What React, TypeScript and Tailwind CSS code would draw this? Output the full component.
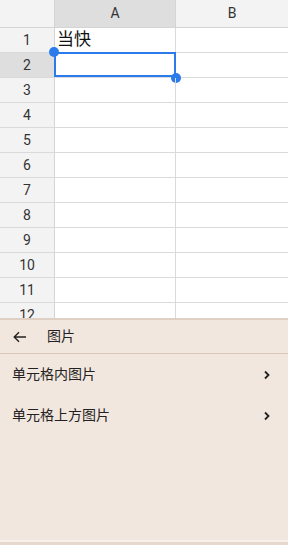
import React from 'react'

const rows = Array.from({ length: 12 }, (_, i) => i + 1)

const font = { fontFamily: 'Roboto, "Noto Sans CJK SC", sans-serif' }

const Grid: React.FC = () => (
  <div className="relative h-[318px] overflow-hidden bg-white">
    <div className="flex h-[28px] border-b border-[#d4d4d4]">
      <div className="w-[55px] shrink-0 border-r border-[#d4d4d4] bg-[#f3f3f3]" />
      <div className="flex w-[121px] shrink-0 items-center justify-center border-r border-[#d4d4d4] bg-[#dedede] text-[14px] text-[#333]">A</div>
      <div className="flex flex-1 items-center justify-center bg-[#f3f3f3] text-[14px] text-[#333]">B</div>
    </div>
    {rows.map((r) => (
      <div key={r} className="flex h-[25px] border-b border-[#dadada]">
        <div className={`flex w-[55px] shrink-0 items-center justify-center border-r border-[#d4d4d4] text-[14px] text-[#333] ${r === 2 ? 'bg-[#dedede]' : 'bg-[#f3f3f3]'}`}>{r}</div>
        <div className="relative flex w-[121px] shrink-0 items-center border-r border-[#dadada] pl-[2px] text-[17px] text-[#111]">
          {r === 1 && '当快'}
          {r === 2 && (
            <>
              <div className="absolute -top-[1px] -left-[1px] h-[25px] w-[122px] border-2 border-[#2b7bec]" />
              <div className="absolute -top-[6px] -left-[6px] h-[10px] w-[10px] rounded-full bg-[#2b7bec]" />
              <div className="absolute -right-[6px] -bottom-[6px] h-[10px] w-[10px] rounded-full bg-[#2b7bec]" />
            </>
          )}
        </div>
        <div className="flex-1" />
      </div>
    ))}
  </div>
)

const Chevron: React.FC = () => (
  <svg width="8" height="10" viewBox="0 0 8 10" fill="none">
    <path d="M2 1.5 L5.5 5 L2 8.5" stroke="#222" strokeWidth="1.8" />
  </svg>
)

const Panel: React.FC = () => (
  <div className="flex flex-1 flex-col border-t-2 border-[#e0d0c3] bg-[#f2e7de]">
    <div className="flex h-[34px] items-center border-b border-[#d6c6b9] px-[13px]">
      <svg width="14" height="12" viewBox="0 0 14 12" fill="none">
        <path d="M13 6 H1.5 M6 1.2 L1.2 6 L6 10.8" stroke="#222" strokeWidth="1.4" />
      </svg>
      <span className="ml-[20px] text-[14px] text-[#222]">图片</span>
    </div>
    <div className="flex h-[41px] items-center justify-between pl-[12px] pr-[17px] text-[14px] text-[#222]">
      <span>单元格内图片</span>
      <Chevron />
    </div>
    <div className="flex h-[41px] items-center justify-between pl-[12px] pr-[17px] text-[14px] text-[#222]">
      <span>单元格上方图片</span>
      <Chevron />
    </div>
    <div className="flex-1" />
    <div className="h-[2px] bg-[#f8f0ea]" />
    <div className="h-[3px] bg-[#e6d8cc]" />
  </div>
)

export default function App() {
  return (
    <div className="flex h-[545px] w-[288px] flex-col overflow-hidden" style={font}>
      <Grid />
      <Panel />
    </div>
  )
}
